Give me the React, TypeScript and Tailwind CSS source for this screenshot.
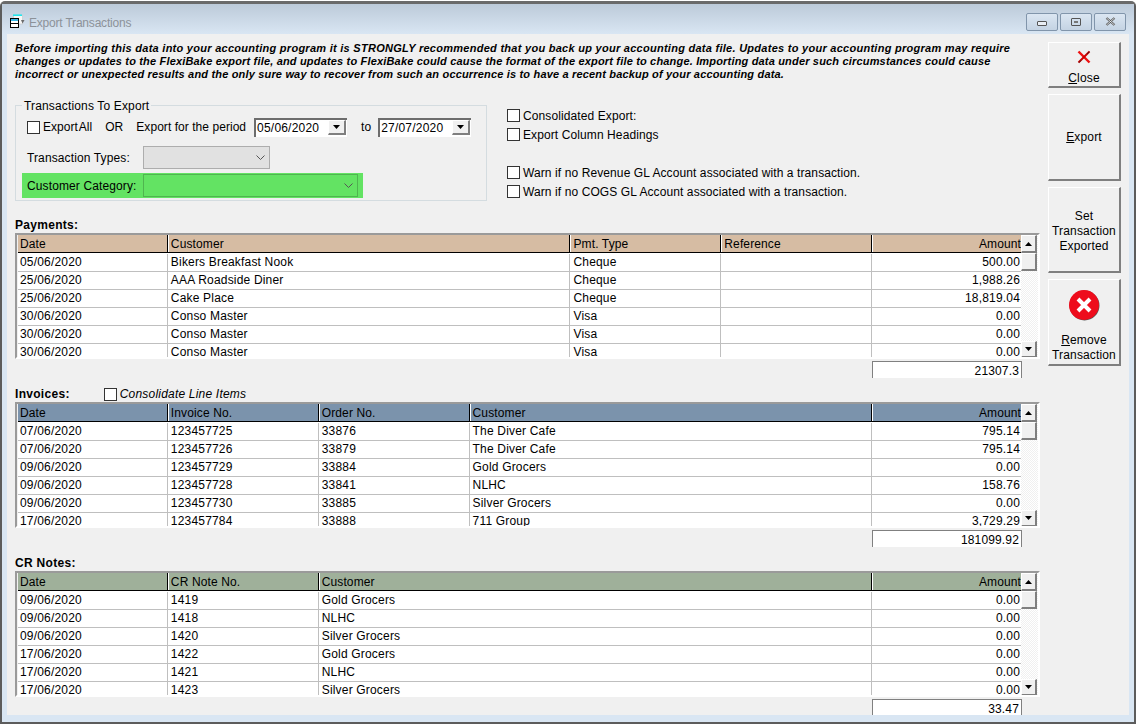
import type { ReactNode } from "react";

type Col = { label: string; width: string; right?: boolean };

const payments = [
  ["05/06/2020", "Bikers Breakfast Nook", "Cheque", "", "500.00"],
  ["25/06/2020", "AAA Roadside Diner", "Cheque", "", "1,988.26"],
  ["25/06/2020", "Cake Place", "Cheque", "", "18,819.04"],
  ["30/06/2020", "Conso Master", "Visa", "", "0.00"],
  ["30/06/2020", "Conso Master", "Visa", "", "0.00"],
  ["30/06/2020", "Conso Master", "Visa", "", "0.00"],
];

const invoices = [
  ["07/06/2020", "123457725", "33876", "The Diver Cafe", "795.14"],
  ["07/06/2020", "123457726", "33879", "The Diver Cafe", "795.14"],
  ["09/06/2020", "123457729", "33884", "Gold Grocers", "0.00"],
  ["09/06/2020", "123457728", "33841", "NLHC", "158.76"],
  ["09/06/2020", "123457730", "33885", "Silver Grocers", "0.00"],
  ["17/06/2020", "123457784", "33888", "711 Group", "3,729.29"],
];

const crNotes = [
  ["09/06/2020", "1419", "Gold Grocers", "0.00"],
  ["09/06/2020", "1418", "NLHC", "0.00"],
  ["09/06/2020", "1420", "Silver Grocers", "0.00"],
  ["17/06/2020", "1422", "Gold Grocers", "0.00"],
  ["17/06/2020", "1421", "NLHC", "0.00"],
  ["17/06/2020", "1423", "Silver Grocers", "0.00"],
];

const paymentCols: Col[] = [
  { label: "Date", width: "w-[151px]" },
  { label: "Customer", width: "w-[403px]" },
  { label: "Pmt. Type", width: "w-[151px]" },
  { label: "Reference", width: "w-[151px]" },
  { label: "Amount", width: "w-[148px]", right: true },
];

const invoiceCols: Col[] = [
  { label: "Date", width: "w-[151px]" },
  { label: "Invoice No.", width: "w-[151px]" },
  { label: "Order No.", width: "w-[151px]" },
  { label: "Customer", width: "w-[403px]" },
  { label: "Amount", width: "w-[148px]", right: true },
];

const crCols: Col[] = [
  { label: "Date", width: "w-[151px]" },
  { label: "CR Note No.", width: "w-[151px]" },
  { label: "Customer", width: "w-[554px]" },
  { label: "Amount", width: "w-[148px]", right: true },
];

const raised =
  "border-t border-l border-t-white border-l-white border-r-2 border-b-2 border-r-[#7f7f7f] border-b-[#7f7f7f]";

const CheckBox = () => (
  <span className="inline-block w-[13px] h-[13px] bg-white border border-[#333333] shrink-0" />
);

const Arrow = ({ down }: { down?: boolean }) => (
  <svg width="7" height="4" viewBox="0 0 7 4">
    <path d={down ? "M0 0h7L3.5 4z" : "M0 4h7L3.5 0z"} fill="#000" />
  </svg>
);

const Chevron = () => (
  <svg width="9" height="5" viewBox="0 0 9 5" fill="none">
    <path d="M0.5 0.5L4.5 4.5L8.5 0.5" stroke="#555" strokeWidth="1" />
  </svg>
);

const DatePicker = ({ value }: { value: string }) => (
  <div className="w-[93px] h-[19px] bg-white flex border-t-2 border-l-2 border-[#6d6d6d] pr-px">
    <span className="flex-1 pl-[1px] leading-[17px] tracking-[0.2px]">{value}</span>
    <span className={`w-[18px] h-[15px] bg-[#f0f0f0] flex items-center justify-center ${raised}`}>
      <Arrow down />
    </span>
  </div>
);

const ScrollBar = () => (
  <div className="w-[17px] h-[123px] flex flex-col bg-[repeating-conic-gradient(#f0f0f0_0_25%,#ffffff_0_50%)] bg-[length:2px_2px]">
    <span className={`w-[16px] h-[18px] bg-[#f0f0f0] flex items-center justify-center ${raised}`}>
      <Arrow />
    </span>
    <span className={`w-[16px] h-[18px] bg-[#f0f0f0] ${raised}`} />
    <span className="flex-1" />
    <span className={`w-[16px] h-[17px] bg-[#f0f0f0] flex items-center justify-center ${raised}`}>
      <Arrow down />
    </span>
  </div>
);

const DataGrid = ({ cols, rows, headerBg }: { cols: Col[]; rows: string[][]; headerBg: string }) => (
  <div className="w-[1025px] h-[126px] overflow-hidden flex border-t-2 border-l-2 border-t-[#9a9a9a] border-l-[#9a9a9a] border-r-2 border-b-2 border-r-white border-b-white pl-px">
    <div className="w-[1004px] h-[124px] overflow-hidden bg-white">
      <div className={`flex h-[19px] border-b border-white shadow-[inset_0_-1px_0_#000] ${headerBg}`}>
        {cols.map((c, i) => (
          <div
            key={c.label}
            className={`${c.width} h-[17px] pl-[2px] leading-[19px] tracking-[0.12px] ${c.right ? "text-right" : ""} ${
              i < cols.length - 1 ? "border-r border-r-white shadow-[inset_-1px_0_0_#000]" : ""
            }`}
          >
            {c.label}
          </div>
        ))}
      </div>
      {rows.map((row, r) => (
        <div key={r} className="flex h-[18px] border-b border-[#bfbfbf]">
          {row.map((cell, i) => (
            <div
              key={i}
              className={`${cols[i].width} h-[17px] leading-[17px] pl-[2px] pr-[1px] whitespace-nowrap tracking-[0.18px] ${
                cols[i].right ? "text-right" : ""
              } ${i < row.length - 1 ? "border-r border-r-white shadow-[inset_-1px_0_0_#bfbfbf]" : ""}`}
            >
              {cell}
            </div>
          ))}
        </div>
      ))}
    </div>
    <ScrollBar />
  </div>
);

const Section = ({
  title,
  extra,
  total,
  children,
}: {
  title: string;
  extra?: ReactNode;
  total: string;
  children: ReactNode;
}) => (
  <section>
    <div className="h-[16px] flex items-center">
      <h2 className="font-bold leading-[14px] tracking-[0.3px]">{title}</h2>
      {extra}
    </div>
    {children}
    <div className="mt-[2px] ml-[857px] w-[150px] h-[17px] bg-white border-t border-x border-[#808080] text-right pr-[2px] leading-[19px] tracking-[0.15px]">
      {total}
    </div>
  </section>
);

const SideButton = ({ height, pad, children }: { height: string; pad?: string; children: ReactNode }) => (
  <button
    className={`${height} ${pad ?? ""} w-[73px] bg-[#f0f0f0] flex flex-col items-center justify-center leading-[15px] tracking-[0.15px] ${raised}`}
  >
    {children}
  </button>
);

const WinButton = ({ children }: { children: ReactNode }) => (
  <span className="w-[32px] h-[18px] rounded-[2px] border border-[#8195ab] bg-gradient-to-b from-[#dbe6f2] to-[#c4d3e3] flex items-center justify-center">
    {children}
  </span>
);

export default function App() {
  return (
    <div className="w-[1139px] h-[726px] bg-white pt-px pr-[3px] pb-[2px] font-['Liberation_Sans',Arial,sans-serif] text-[12px] text-black overflow-hidden">
      <div className="h-full border-t-[3px] border-x-2 border-b-2 border-[#5c5c5c] border-t-[#6a6a6a] rounded-t-[5px] bg-[#d9e6f3] flex flex-col">
        {/* title bar */}
        <div className="h-[30px] shrink-0 pl-[8px] pr-[8px] flex items-center bg-gradient-to-b from-[#bccad9] to-[#d9e6f3]">
          <svg width="15" height="14" viewBox="0 0 15 14" className="mt-[4px]">
            <rect x="3.5" y="1" width="9" height="9" fill="#f6f6f6" stroke="#c8c8c8" strokeWidth="0.7" />
            <path d="M3 1.2h9" stroke="#22e6ee" strokeWidth="1.6" />
            <path d="M11 6h3.5l-2 3.5z" fill="#6b6b6b" />
            <rect x="0.5" y="4.5" width="8" height="9" fill="#fff" stroke="#000" />
            <rect x="1" y="5" width="7" height="2" fill="#35b6e6" />
            <path d="M1 9.5h7" stroke="#000" strokeWidth="1" />
          </svg>
          <span className="ml-[4px] mt-[7px] text-[12px] text-[#8c9299] tracking-[-0.2px]">Export Transactions</span>
          <div className="ml-auto flex gap-[2px] mt-[5px]">
            <WinButton>
              <span className="w-[10px] h-[5px] bg-[#e9eef4] border border-[#555] rounded-[1px] mt-[3px]" />
            </WinButton>
            <WinButton>
              <span className="w-[10px] h-[8px] border border-[#555] rounded-[1px] flex items-center justify-center">
                <span className="w-[4px] h-[2px] bg-[#777]" />
              </span>
            </WinButton>
            <WinButton>
              <svg width="11" height="9" viewBox="0 0 11 9">
                <path d="M1.5 1L9.5 8M9.5 1L1.5 8" stroke="#555" strokeWidth="2.2" />
                <path d="M1.5 1L9.5 8M9.5 1L1.5 8" stroke="#eef2f6" strokeWidth="0.8" />
              </svg>
            </WinButton>
          </div>
        </div>

        {/* client area */}
        <div className="flex-1 mx-[5px] mb-[7px] bg-[#f0f0f0] flex overflow-hidden">
          <div className="w-[1041px] pl-[8px] shrink-0">
            <p className="mt-[8px] text-[11px] leading-[13px] font-bold italic whitespace-nowrap tracking-[0.175px]">
              <span className="block tracking-[0.272px]">
                Before importing this data into your accounting program it is STRONGLY recommended that you back up your
                accounting data file. Updates to your accounting program may require
              </span>
              <span className="block">
                changes or updates to the FlexiBake export file, and updates to FlexiBake could cause the format of the
                export file to change. Importing data under such circumstances could cause
              </span>
              <span className="block">
                incorrect or unexpected results and the only sure way to recover from such an occurrence is to have a
                recent backup of your accounting data.
              </span>
            </p>

            <div className="mt-[17px] flex tracking-[0.12px]">
              <fieldset className="w-[472px] h-[103px] border border-[#d4dce0]">
                <legend className="ml-[6px] px-[2px] pt-px leading-[14px] tracking-[0.15px]">Transactions To Export</legend>
                <div className="h-[18px] mt-[5px] pl-[11px] flex items-center tracking-[0.05px]">
                  <CheckBox />
                  <span className="ml-[3px] [word-spacing:-2px]">Export All</span>
                  <span className="ml-[13px]">OR</span>
                  <span className="ml-[13px]">Export for the period</span>
                  <span className="ml-[8px]"><DatePicker value="05/06/2020" /></span>
                  <span className="ml-[14px] mr-[7px]">to</span>
                  <DatePicker value="27/07/2020" />
                </div>
                <div className="h-[23px] mt-[10px] pl-[11px] flex items-center">
                  <span className="w-[116px]">Transaction Types:</span>
                  <span className="w-[127px] h-[23px] bg-[#e1e1e1] border border-[#adadad] flex items-center justify-end pr-[4px]">
                    <Chevron />
                  </span>
                </div>
                <div className="ml-[6px] mt-[4px] w-[341px] h-[25px] bg-[#63e363] pl-[5px] flex items-center">
                  <span className="w-[116px]">Customer Category:</span>
                  <span className="w-[215px] h-[23px] border border-[#4fb54f] flex items-center justify-end pr-[4px]">
                    <Chevron />
                  </span>
                </div>
              </fieldset>

              <div className="ml-[20px] mt-[1px] pt-[7px] tracking-[0.1px]">
                <label className="h-[19px] flex items-center gap-[3px]"><CheckBox />Consolidated Export:</label>
                <label className="h-[19px] flex items-center gap-[3px]"><CheckBox />Export Column Headings</label>
                <label className="h-[19px] mt-[19px] flex items-center gap-[3px]"><CheckBox />Warn if no Revenue GL Account associated with a transaction.</label>
                <label className="h-[19px] flex items-center gap-[3px]"><CheckBox />Warn if no COGS GL Account associated with a transaction.</label>
              </div>
            </div>

            <div className="mt-[16px] flex flex-col gap-[8px]">
              <Section title="Payments:" total="21307.3">
                <DataGrid cols={paymentCols} rows={payments} headerBg="bg-[#d6bca3]" />
              </Section>
              <Section
                title="Invoices:"
                total="181099.92"
                extra={
                  <span className="ml-[34px] flex items-center gap-[3px] italic tracking-[0.2px]">
                    <CheckBox />
                    Consolidate Line Items
                  </span>
                }
              >
                <DataGrid cols={invoiceCols} rows={invoices} headerBg="bg-[#7b93ac]" />
              </Section>
              <Section title="CR Notes:" total="33.47">
                <DataGrid cols={crCols} rows={crNotes} headerBg="bg-[#9fb09a]" />
              </Section>
            </div>
          </div>

          {/* side buttons */}
          <div className="pt-[8px] flex flex-col gap-[6px]">
            <SideButton height="h-[46px]" pad="pt-[6px]">
              <svg width="14" height="14" viewBox="0 0 14 14" className="mb-[7px]">
                <path d="M1.5 1.5L12.5 12.5" stroke="#ee1111" strokeWidth="2.4" />
                <path d="M12.5 1.5L1.5 12.5" stroke="#cc0000" strokeWidth="2" />
                <path d="M4 10.5L2 12.5M10 4L12.5 1.5" stroke="#222" strokeWidth="0.8" />
              </svg>
              <span><u>C</u>lose</span>
            </SideButton>
            <SideButton height="h-[87px]" pad="pt-[1px]">
              <span><u>E</u>xport</span>
            </SideButton>
            <SideButton height="h-[86px]" pad="pt-[4px]">
              Set
              <br />
              Transaction
              <br />
              Exported
            </SideButton>
            <SideButton height="h-[87px]" pad="pt-[8px]">
              <svg width="32" height="32" viewBox="0 0 32 32" className="mb-[12px]">
                <circle cx="16.5" cy="16.5" r="15" fill="#555" />
                <circle cx="16" cy="16" r="15" fill="#ee0c1c" />
                <path d="M10 10L22 22M22 10L10 22" stroke="#fff" strokeWidth="4" />
              </svg>
              <span><u>R</u>emove</span>
              <span>Transaction</span>
            </SideButton>
          </div>
        </div>
      </div>
    </div>
  );
}
